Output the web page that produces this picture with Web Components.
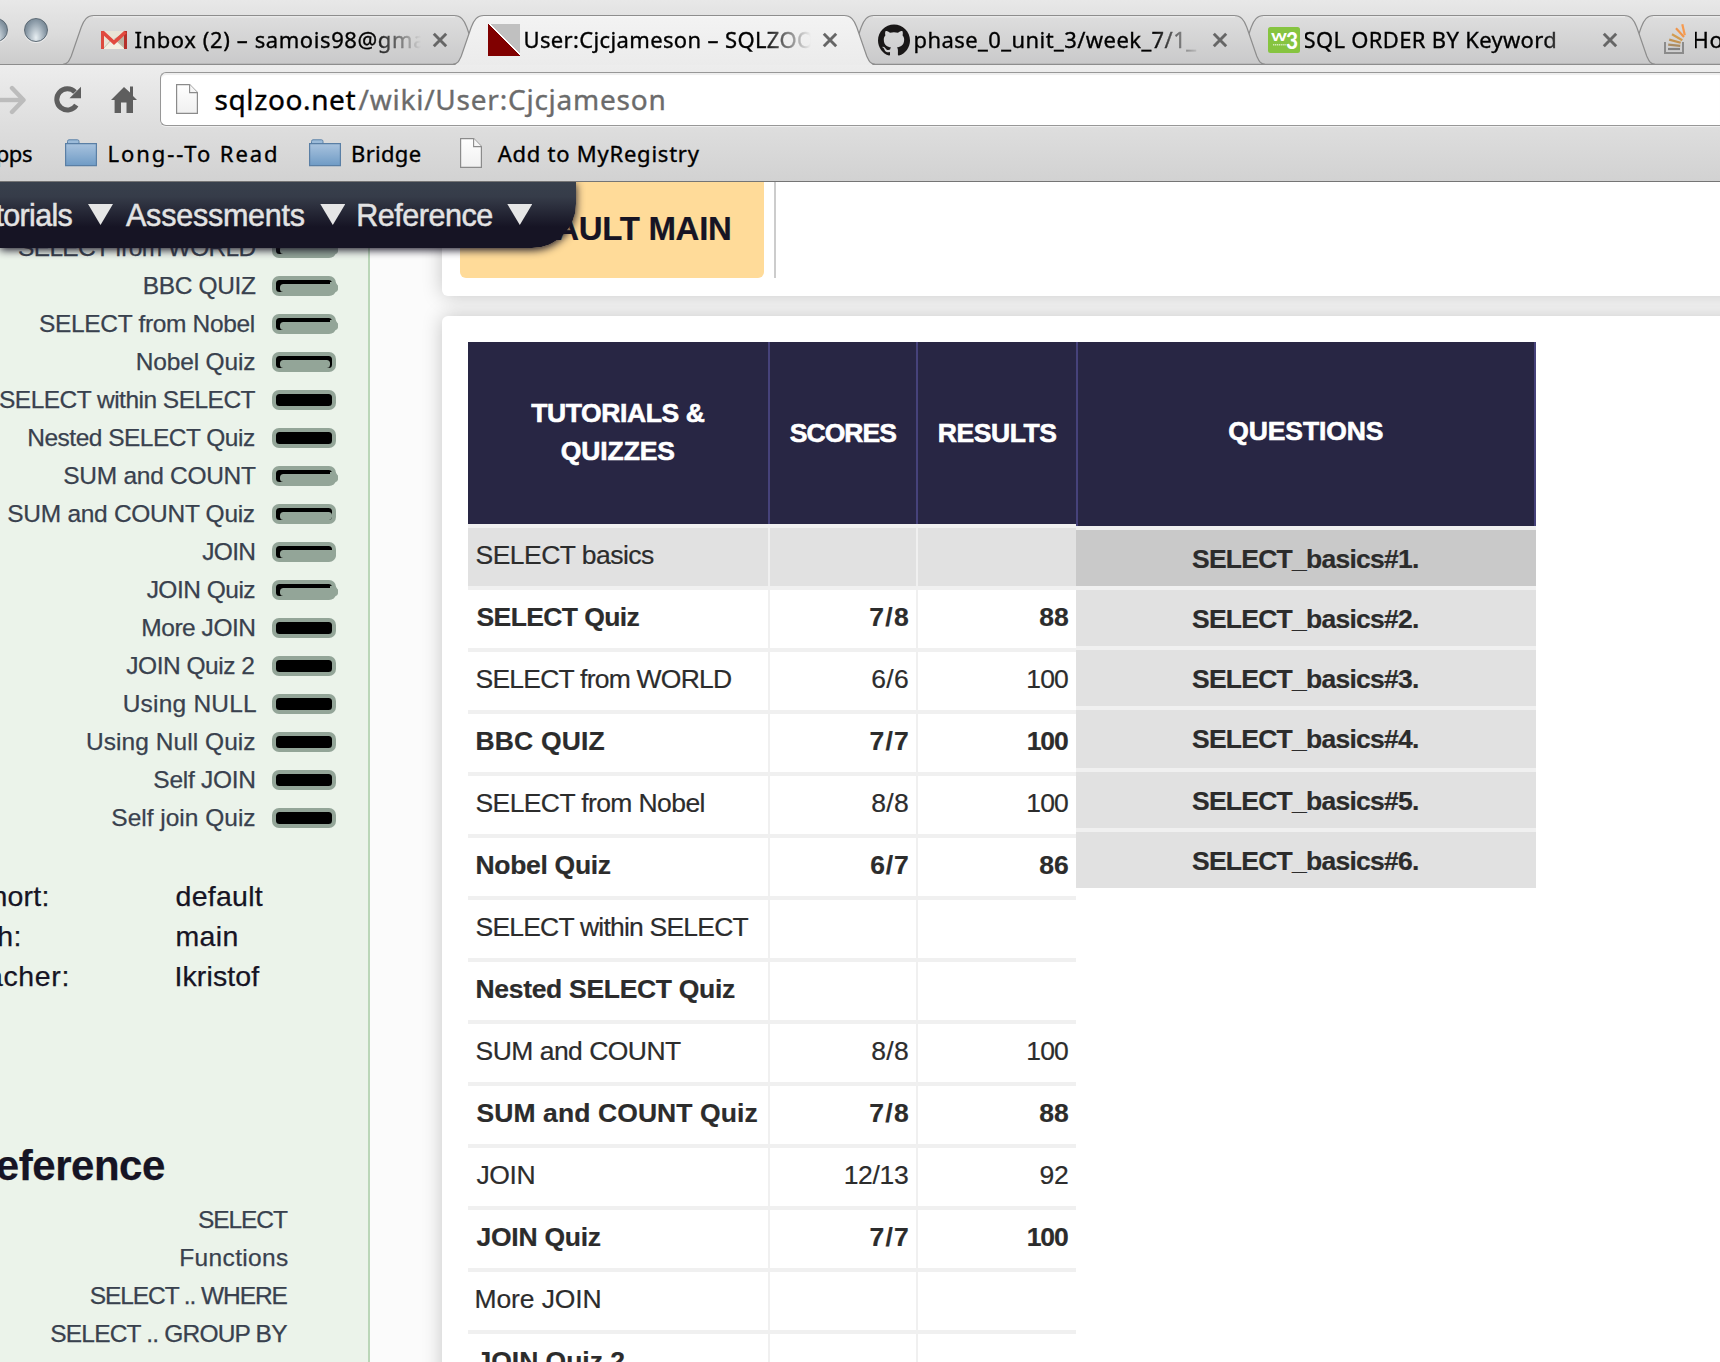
<!DOCTYPE html>
<html lang="en">
<head>
<meta charset="utf-8">
<title>User:Cjcjameson – SQLZOO</title>
<style>
html,body{margin:0;height:1362px;overflow:hidden;background:#fbfbfb}
</style>
</head>
<body>
<browser-window></browser-window>
<script>
class Base extends HTMLElement{
  connectedCallback(){
    if(this.shadowRoot) return;
    this.attachShadow({mode:'open'}).innerHTML=this.render();
    this.ready&&this.ready();
  }
  at(n,d=''){return this.getAttribute(n)??d}
}

/* Label whose inked width is set by "w"; "probe" names the part that is measured. */
class FitText extends Base{
  render(){return `<style>:host{display:block;flex:none;white-space:nowrap}span{display:block;width:max-content}</style><span><slot></slot></span>`}
  ready(){
    const cs=getComputedStyle(this),c=document.createElement('canvas').getContext('2d');
    c.font=`${cs.fontWeight} ${cs.fontSize} ${cs.fontFamily}`;
    const t=this.at('probe',this.textContent),m=c.measureText(t),w=+this.at('w');
    const ink=m.actualBoundingBoxLeft+m.actualBoundingBoxRight;
    this.style.width=w+'px';
    const s=this.shadowRoot.querySelector('span');
    s.style.letterSpacing=((w-ink)/Math.max(1,t.length-1)).toFixed(3)+'px';
    s.style.marginLeft=m.actualBoundingBoxLeft.toFixed(2)+'px';
  }
}

const ICONS={
gmail:`<svg width="32" height="32" viewBox="0 0 32 32"><path d="M5 7h22v18H5z" fill="#e9e4d6"/><path d="M5 25l11-10 11 10z" fill="#f3efe2"/><path d="M16 15L27 25V8z" fill="#b9b3a3"/><path d="M5 25L13 16M27 25l-8-9" stroke="#c9c3b0" fill="none"/><path d="M4.500 25V7" stroke="#dd4b3e" stroke-width="3" fill="none"/><path d="M27.500 25V7" stroke="#b5302a" stroke-width="3" fill="none"/><path d="M4.500 8L16 18.500 27.500 8" stroke="#e24a3f" stroke-width="3.600" fill="none"/></svg>`,
zoo:`<svg width="32" height="32" viewBox="0 0 32 32" shape-rendering="crispEdges"><path d="M0 0h32v32H0z" fill="#c0c0c0"/><path d="M0 0h2L32 30v2H0z" fill="#fff"/><path d="M0 0L32 32H0z" fill="#800000"/></svg>`,
github:`<svg width="32" height="32" viewBox="0 0 24 24"><path fill="#191717" d="M12 .297c-6.630 0-12 5.373-12 12 0 5.303 3.438 9.800 8.205 11.385.6.113.820-.258.820-.577 0-.285-.010-1.040-.015-2.040-3.338.724-4.042-1.610-4.042-1.610C4.422 18.070 3.633 17.700 3.633 17.700c-1.087-.744.084-.729.084-.729 1.205.084 1.838 1.236 1.838 1.236 1.070 1.835 2.809 1.305 3.495.998.108-.776.417-1.305.760-1.605-2.665-.3-5.466-1.332-5.466-5.930 0-1.310.465-2.380 1.235-3.220-.135-.303-.540-1.523.105-3.176 0 0 1.005-.322 3.300 1.230.960-.267 1.980-.399 3-.405 1.020.006 2.040.138 3 .405 2.280-1.552 3.285-1.230 3.285-1.230.645 1.653.240 2.873.120 3.176.765.840 1.230 1.910 1.230 3.220 0 4.610-2.805 5.625-5.475 5.920.420.360.810 1.096.810 2.220 0 1.606-.015 2.896-.015 3.286 0 .315.210.690.825.570C20.565 22.092 24 17.592 24 12.297c0-6.627-5.373-12-12-12"/></svg>`,
w3:`<svg width="32" height="32" viewBox="0 0 32 32"><rect y="3" width="32" height="26" rx="2.500" fill="#86c440"/><g fill="#fff" font-family="Lato,sans-serif" font-weight="700"><text x="3" y="17" font-size="16" textLength="16" lengthAdjust="spacingAndGlyphs">w</text><text x="18" y="24.500" font-size="23" textLength="12" lengthAdjust="spacingAndGlyphs" font-weight="900">3</text></g><path d="M5 20.700h13" stroke="#d3ebb8" stroke-width="1.600" stroke-dasharray="1.300 .6"/></svg>`,
so:`<svg width="32" height="32" viewBox="0 0 32 32" fill="none"><path d="M7 18v11h18V18" stroke="#8b8b8b" stroke-width="2"/><g stroke-width="2.200"><path d="M10 25h12" stroke="#828282"/><path d="M10.200 20.700l12 1.200" stroke="#a98b62"/><path d="M11.200 15.600l11.500 3.200" stroke="#c3924f"/><path d="M14 10.300l10.300 6" stroke="#d29c50"/><path d="M18 4.300l8 8.700" stroke="#f0954a"/><path d="M24.300 .3l2.500 10.900" stroke="#f79a4e"/></g></svg>`,
folder:`<svg width="32" height="28" viewBox="0 0 32 28"><defs><linearGradient id="f" x2="0" y2="1"><stop stop-color="#a9c3de"/><stop offset="1" stop-color="#6f9bc5"/></linearGradient></defs><path d="M2.500 5V2.500Q2.500.8 4 .8h8.500q1.500 0 1.500 1.700V5" fill="#9cbbd9" stroke="#5c82a8"/><path d="M.6 4.600h30.800v22H.6z" fill="url(#f)" stroke="#5a7fa5" stroke-width="1.200"/></svg>`,
page:`<svg width="22" height="30" viewBox="0 0 22 30"><defs><linearGradient id="p" x2="0" y2="1"><stop stop-color="#fff"/><stop offset="1" stop-color="#f0f0f0"/></linearGradient></defs><path d="M.6.600h13L21.400 8.500v20.900H.6z" fill="url(#p)" stroke="#8b8b8b" stroke-width="1.200"/><path d="M13.600.6v8h7.800" fill="#f6f6f6" stroke="#8b8b8b" stroke-width="1.100"/></svg>`,
forward:`<svg width="28" height="30" viewBox="0 0 28 30" fill="none" stroke="#bcbcbc" stroke-width="4.400" stroke-linejoin="round"><path d="M-6 15H23"/><path d="M12 3L23.500 15 12 27" stroke-linecap="round"/></svg>`,
reload:`<svg width="28" height="28" viewBox="0 0 28 28"><path d="M22.300 19.200A10.600 10.600 0 1 1 21 6" fill="none" stroke="#5e5e5e" stroke-width="5"/><path d="M27 .8V12.300H15.500z" fill="#5e5e5e"/></svg>`,
home:`<svg width="26" height="28" viewBox="0 0 26 28" fill="#5e5e5e"><path d="M13 1L0 14h3.600v13H10v-10.500h5.500V27H22V14h4l-4-4V.5h-3V6.500z"/></svg>`,
close:`<svg width="16" height="16" viewBox="0 0 16 16"><path d="M1.800 1.800l12.400 12.400M14.200 1.800l-12.400 12.400" stroke="#666" stroke-width="2.900"/></svg>`
};
class UiIcon extends Base{
  render(){return `<style>:host{display:block;flex:none;line-height:0}</style>${ICONS[this.at('name')]}`}
}

class BrowserTab extends Base{
  render(){
    const on=this.hasAttribute('active'),c=on?['#f3f3f3','#ebebeb']:['#dedede','#c9c9ca'];
    return `<style>
    :host{display:grid;flex:none;width:422px;height:50px;margin-right:-32px}
    .s,.r{grid-area:1/1}
    .s{overflow:visible}
    .r{display:flex;align-items:center;padding:0 0 1px 35px;position:relative}
    .t{width:286px;margin:0 0 2px 4.500px;overflow:hidden;line-height:48px;font-size:22px;-webkit-mask:linear-gradient(90deg,#000 238px,transparent 286px)}
    .x{margin-left:11.500px;display:flex}
    </style>
    <svg class="s" width="422" height="50" viewBox="0 0 422 50"><defs><linearGradient id="g" x2="0" y2="1"><stop stop-color="${c[0]}"/><stop offset="1" stop-color="${c[1]}"/></linearGradient></defs>
    <path d="M0 ${on?51:49.500}C5 49 6 46 8.300 41L18.300 12C21 5 24 .5 31 .5H391C398 .5 401 5 403.700 12L413.700 41C416 46 417 49 422 ${on?51:49.500}Z" fill="url(#g)"/>
    <path d="M0 49.300C5 49 6 46 8.300 41L18.300 12C21 5 24 .5 31 .5H391C398 .5 401 5 403.700 12L413.700 41C416 46 417 49 422 49.300${on?'':'Z'}" fill="none" stroke="#8d8d8d" stroke-width="1.200"/>
    <path d="M30 1.800H392" stroke="#fff" stroke-opacity=".5"/></svg>
    <div class="r"><ui-icon name="${this.at('icon')}"></ui-icon><div class="t"><slot></slot></div><div class="x"><ui-icon name="close"></ui-icon></div></div>`}
}

class TabStrip extends Base{
  render(){return `<style>
    :host{display:flex;height:65px;background:linear-gradient(#e8e8e8,#dcdcdc 50%,#cbcbcb);box-shadow:inset 0 -1px #8d8d8d;overflow:hidden;align-items:flex-start}
    .w{display:flex;gap:16px;width:63px;flex:none;justify-content:flex-end;padding-top:18px;box-sizing:border-box;padding-right:15px;align-self:stretch}
    i{flex:none;width:24px;height:24px;border-radius:50%;box-sizing:border-box;border:1.500px solid #5c6a75;background:radial-gradient(ellipse at 50% 85%,#e8eff3 0,#b4c0c9 35%,#8797a4 65%,#63727e 100%);box-shadow:0 1px #eee}
    .tabs{display:flex;padding-top:15px}
    browser-tab{position:relative}
    browser-tab:nth-child(1){z-index:4}browser-tab:nth-child(2){z-index:5}browser-tab:nth-child(3){z-index:3}browser-tab:nth-child(4){z-index:2}
    </style>
    <div class="w"><i></i><i></i></div>
    <div class="tabs">
    <browser-tab icon="gmail"><fit-text w="242" probe="Inbox (2) – samois98@">Inbox (2) – samois98@gma</fit-text></browser-tab>
    <browser-tab icon="zoo" active><fit-text w="175" probe="User:Cjcjameson">User:Cjcjameson – SQLZOO</fit-text></browser-tab>
    <browser-tab icon="github"><fit-text w="161.7" probe="phase_0_unit_3">phase_0_unit_3/week_7/1_</fit-text></browser-tab>
    <browser-tab icon="w3"><fit-text w="250.7">SQL ORDER BY Keyword</fit-text></browser-tab>
    <browser-tab icon="so"><fit-text w="28">Ho</fit-text></browser-tab>
    </div>`}
}

class TopToolbar extends Base{
  render(){return `<style>
    :host{display:block;height:117px;box-sizing:border-box;background:linear-gradient(#ededed,#dedede 52%,#d2d2d2);border-bottom:1.500px solid #757575;overflow:hidden}
    .n{display:flex;align-items:center;padding-top:7px;height:54px}
    .b{display:flex;gap:27px;width:160px;flex:none;align-items:center;padding-top:2px}
    .o{flex:1;height:52px;border:1px solid #979797;border-right:0;border-radius:6px 0 0 6px;background:#fff;box-shadow:inset 0 2px 1px #eee,0 1px #efefef;display:flex;align-items:center;font-size:28px;line-height:52px;padding-left:15px}
    .u{margin:0 3px 0 17.500px;color:#000}.p{color:#6b6b6b;-webkit-text-stroke-color:#6b6b6b}
    .m{display:flex;align-items:center;height:54px;font-size:22px;line-height:54px}
    .m ui-icon{margin-right:12.500px}
    </style>
    <div class="n"><div class="b"><ui-icon name="forward" style="margin-right:-1px"></ui-icon><ui-icon name="reload" style="margin-right:2px"></ui-icon><ui-icon name="home"></ui-icon></div>
    <div class="o"><ui-icon name="page"></ui-icon><fit-text class="u" w="140">sqlzoo.net</fit-text><fit-text class="p" w="306">/wiki/User:Cjcjameson</fit-text></div></div>
    <div class="m"><fit-text w="50" style="margin:0 33px 0 -18px">Apps</fit-text>
    <ui-icon name="folder"></ui-icon><fit-text w="166.6" style="margin-right:32.500px">Long--To Read</fit-text>
    <ui-icon name="folder"></ui-icon><fit-text w="67.6" style="margin-right:39px">Bridge</fit-text>
    <ui-icon name="page" style="margin-right:16px"></ui-icon><fit-text w="202">Add to MyRegistry</fit-text></div>`}
}

class ProgressPill extends Base{
  render(){
    const f=+this.at('fill','0');
    return `<style>:host{display:block;flex:none;width:64px;height:20px}svg{display:block;overflow:visible}</style>
    <svg width="64" height="20"><rect width="64" height="20" rx="7" fill="#93a598"/><rect x="4" y="4" width="56" height="12" rx="3.500"/>${f?`<rect x="8" y="8" width="${f}" height="8" rx="3.500" fill="#93a598"/>${f>54?'<path d="M52 8h8v8h-8z" fill="#93a598"/>':''}${f>57?'<path d="M58 6h5.500l2.500 4v3l-5 6h-3z" fill="#93a598"/>':''}`:''}</svg>`}
}

class SideBar extends Base{
  render(){
    const rows=[['SELECT from WORLD',237,58],['BBC QUIZ',111.3,58],['SELECT from Nobel',214.3,58],['Nobel Quiz',117.7,50],['SELECT within SELECT',256,0],['Nested SELECT Quiz',226,0],['SUM and COUNT',191.7,58],['SUM and COUNT Quiz',247,52],['JOIN',52,56],['JOIN Quiz',108.7,58],['More JOIN',111,0],['JOIN Quiz 2',128,0],['Using NULL',132.3,0],['Using Null Quiz',168.3,0],['Self JOIN',100,0],['Self join Quiz',143,0]];
    const refs=[['SELECT',89],['Functions',106.7],['SELECT .. WHERE',197.3],['SELECT .. GROUP BY',236.7]];
    const info=[['Cohort:',92,'default',86.3],['Path:',64,'main',60],['Teacher:',112,'Ikristof',82.7]];
    const edge=t=>/[Nl2]$/.test(t)?1.7:/z$/.test(t)?.7:0;
    return `<style>
    :host{display:block;width:370px;flex:none;box-sizing:border-box;border-right:2px solid #bad6b8;background:#ebf3ea;padding-top:47px;overflow:hidden;color:#39414e;font-size:24.500px;-webkit-text-stroke:.25px}
    .r{display:flex;justify-content:flex-end;align-items:center;gap:16px;height:38px;line-height:38px;padding-right:32px}
    .f{padding-right:80px}
    .i{display:grid;grid-template-columns:221px 1fr;margin:39px 0 145px -44.500px;color:#161424;font-size:28.500px;line-height:40px}
    h2{margin:0 0 10px -32px;font-size:42px;line-height:50px;color:#161424}
    </style>
    ${rows.map(([t,w,f])=>`<div class="r"><fit-text w="${w}" style="margin-right:${edge(t)}px">${t}</fit-text><progress-pill fill="${f}"></progress-pill></div>`).join('')}
    <div class="i">${info.map(([a,w,b,v])=>`<fit-text w="${w}">${a}</fit-text><fit-text w="${v}">${b}</fit-text>`).join('')}</div>
    <h2><fit-text w="196">Reference</fit-text></h2>
    ${refs.map(([t,w])=>`<div class="r f"><fit-text w="${w}">${t}</fit-text></div>`).join('')}`}
}

class NavMenu extends Base{
  render(){return `<style>
    :host{display:flex;align-items:center;position:absolute;left:0;top:0;width:576px;height:66px;box-sizing:border-box;background:linear-gradient(#38404c 0,#363c49 22%,#161424 68%);border-radius:0 0 44px 0;box-shadow:0 2px 8px #161424;color:#e3e3e3;font-size:30.500px;line-height:66px;-webkit-text-stroke:.5px #e3e3e3;z-index:5}
    i{flex:none;width:25px;height:21px;background:#e6e6e6;clip-path:polygon(0 0,100% 0,50% 100%);margin:0 13px 1px 15.500px}
    </style>
    <fit-text w="110" style="margin-left:-37.500px">Tutorials</fit-text><i></i><fit-text w="178.8">Assessments</fit-text><i></i><fit-text w="134">Reference</fit-text><i style="margin-left:15px"></i>`}
}

class ScoreTable extends Base{
  render(){
    const rows=[['SELECT basics',178],['SELECT Quiz',163],['SELECT from WORLD',255,'6/6',35.7,'100',39.7],['BBC QUIZ',128,'7/7',37.5,'100',40.3],['SELECT from Nobel',228.5,'8/8',35.7,'100',39.7],['Nobel Quiz',134.3,'6/7',37.8,'86',28.7],['SELECT within SELECT',272.5],['Nested SELECT Quiz',258.5],['SUM and COUNT',204.6,'8/8',35.7,'100',39.7],['SUM and COUNT Quiz',281,'7/8',37.8,'88',28.7],['JOIN',57,'12/13',62.3,'92',27.4],['JOIN Quiz',124.3,'7/7',37.5,'100',40.3],['More JOIN',123],['JOIN Quiz 2',147.7]];
    rows[1].push('7/8',37.8,'88',28.7);
    return `<style>
    :host{display:block;width:608px;flex:none}
    .h,.r{display:grid;grid-template-columns:300px 146px 158px;column-gap:2px}
    .h{background:#46427a;height:182px;border-bottom:4px solid #f0f0f0;color:#fff;font-weight:700;line-height:38px;-webkit-text-stroke:.6px #fff}
    .h div{background:#282644;display:flex;flex-direction:column;align-items:center;justify-content:center}
    .h div:nth-child(1){padding-bottom:3px}
    .h div:nth-child(3){padding-left:1px}
    .r{height:58px;border-bottom:4px solid #f0f0f0;background:#f0f0f0;line-height:54px}
    .r div{background:#fff;display:flex;justify-content:flex-end;padding:0 8px}
    .r div:first-child{justify-content:flex-start;padding-left:8.500px}
    .r.on div{background:#e1e1e1}
    .b{font-weight:700}
    </style>
    <div class="h"><div><fit-text w="173.7">TUTORIALS &amp;</fit-text><fit-text w="112.7">QUIZZES</fit-text></div><div><fit-text w="106.7">SCORES</fit-text></div><div><fit-text w="117.7">RESULTS</fit-text></div></div>
    ${rows.map(([t,w,a,aw,b,bw],i)=>`<div class="r${i%2?' b':''}${i?'':' on'}"><div><fit-text w="${w}">${t}</fit-text></div><div>${a?`<fit-text w="${aw}">${a}</fit-text>`:''}</div><div>${b?`<fit-text w="${bw}">${b}</fit-text>`:''}</div></div>`).join('')}`}
}

class QuestionList extends Base{
  render(){return `<style>
    :host{display:block;width:460px;flex:none;font-weight:700}
    .h{box-sizing:border-box;height:184px;background:#282644;border:solid #46427a;border-width:0 2px;display:flex;justify-content:center;align-items:center;color:#fff;line-height:38px;padding-bottom:7px;-webkit-text-stroke:.6px #fff}
    .q{height:56px;border-top:4px solid #f0f0f0;background:#e1e1e1;display:flex;justify-content:center;line-height:58px;padding-right:2px}
    .q:nth-of-type(2){background:#c9c9c9;background-clip:padding-box}
    .q:nth-of-type(5){height:58px}
    </style><div class="h"><fit-text w="153.6">QUESTIONS</fit-text></div>
    ${[1,2,3,4,5,6].map(n=>`<div class="q"><fit-text w="226">SELECT_basics#${n}.</fit-text></div>`).join('')}`}
}

class PageBody extends Base{
  render(){return `<style>
    :host{display:flex;position:relative;height:1180px;overflow:hidden;background:#fbfbfb;font-family:"Liberation Sans",Arial,sans-serif;color:#2c2c2c;-webkit-text-stroke:.2px}
    main{flex:1;margin:0 -40px 0 72px;display:flex;flex-direction:column;gap:20px}
    section{background:#fff;box-shadow:0 0 20px rgba(0,0,0,.22)}
    .a{height:114px;border-radius:0 0 0 6px;display:flex;padding-left:18px;align-items:flex-start}
    .y{width:304px;height:96px;border-radius:0 0 6px 6px;background:#ffdb99;color:#161424;font-weight:700;font-size:33px;display:flex;justify-content:center;line-height:93px}
    .l{width:2px;height:96px;background:#ccc;margin-left:10px}
    .c{flex:1;border-radius:6px 0 0 0;margin-bottom:-40px;padding:26px 0 0 26px;display:flex;align-items:flex-start;font-size:26.500px;min-height:0;position:relative}
    </style>
    <nav-menu></nav-menu><side-bar></side-bar>
    <main><section class="a"><div class="y"><fit-text w="236">DEFAULT MAIN</fit-text></div><div class="l"></div></section>
    <section class="c"><score-table></score-table><question-list></question-list></section></main>`}
}

class BrowserWindow extends Base{
  render(){return `<style>:host{display:block;width:1720px;height:1362px;overflow:hidden;font-family:"Noto Sans",sans-serif;color:#000;-webkit-text-stroke:.35px}</style>
  <tab-strip></tab-strip><top-toolbar></top-toolbar><page-body></page-body>`}
}

customElements.define('browser-window',BrowserWindow);
customElements.define('tab-strip',TabStrip);
customElements.define('browser-tab',BrowserTab);
customElements.define('top-toolbar',TopToolbar);
customElements.define('page-body',PageBody);
customElements.define('nav-menu',NavMenu);
customElements.define('side-bar',SideBar);
customElements.define('progress-pill',ProgressPill);
customElements.define('score-table',ScoreTable);
customElements.define('question-list',QuestionList);
customElements.define('ui-icon',UiIcon);
customElements.define('fit-text',FitText);
</script>
</body>
</html>
